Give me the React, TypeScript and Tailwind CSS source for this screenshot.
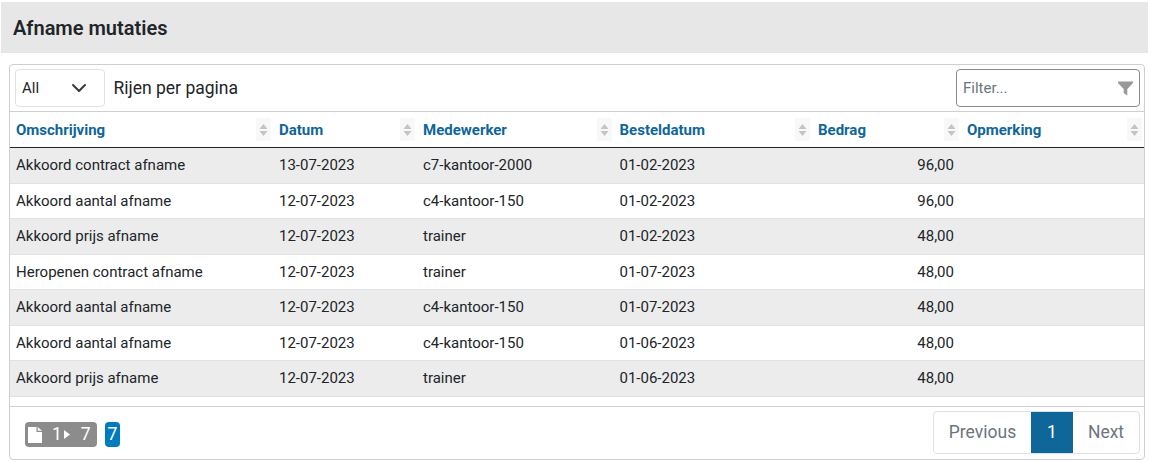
const rows = [
  ["Akkoord contract afname", "13-07-2023", "c7-kantoor-2000", "01-02-2023", "96,00"],
  ["Akkoord aantal afname", "12-07-2023", "c4-kantoor-150", "01-02-2023", "96,00"],
  ["Akkoord prijs afname", "12-07-2023", "trainer", "01-02-2023", "48,00"],
  ["Heropenen contract afname", "12-07-2023", "trainer", "01-07-2023", "48,00"],
  ["Akkoord aantal afname", "12-07-2023", "c4-kantoor-150", "01-07-2023", "48,00"],
  ["Akkoord aantal afname", "12-07-2023", "c4-kantoor-150", "01-06-2023", "48,00"],
  ["Akkoord prijs afname", "12-07-2023", "trainer", "01-06-2023", "48,00"],
];

const columns = [
  { name: "Omschrijving", width: "w-[263px]" },
  { name: "Datum", width: "w-[144px]" },
  { name: "Medewerker", width: "w-[196.5px]" },
  { name: "Besteldatum", width: "w-[198.5px]" },
  { name: "Bedrag", width: "w-[149px]" },
  { name: "Opmerking", width: "w-[183px]" },
];

function SortIcon() {
  return (
    <span className="flex h-[23px] w-[15px] items-center justify-center bg-[#f8f8f8]">
      <svg width="9" height="14" viewBox="0 0 9 14" fill="#c4c4c4">
        <path d="M4.5 1 L8.5 6 H.5 Z" />
        <path d="M.5 8 H8.5 L4.5 13 Z" />
      </svg>
    </span>
  );
}

export default function App() {
  return (
    <div className="h-[462px] w-[1149px] overflow-hidden bg-white pt-[2px] pl-[1px] font-['Roboto',sans-serif] text-[15px] text-[#212529]">
      <div className="flex h-[51px] w-[1147px] items-center bg-[#e7e7e7] pl-[12px]">
        <h1 className="text-[20px] font-semibold text-[#212529]">Afname mutaties</h1>
      </div>
      <div className="mt-[11px] ml-[8px] h-[396px] w-[1136px] rounded-[4px] border border-[#cfcfcf]">
        <div className="flex h-[47px] items-center justify-between border-b border-[#cfcfcf] pr-[4px] pl-[5px]">
          <div className="flex items-center">
            <div className="flex h-[38px] w-[90px] items-center justify-between rounded-[4px] border border-[#dee2e6] pr-[17px] pl-[6px]">
              <span>All</span>
              <svg width="16" height="16" viewBox="0 0 16 16" fill="none" stroke="#343a40" strokeWidth="2" strokeLinecap="round" strokeLinejoin="round">
                <path d="M2 5l6 6 6-6" />
              </svg>
            </div>
            <span className="ml-[8.5px] text-[17.5px]">Rijen per pagina</span>
          </div>
          <div className="flex h-[38px] w-[184px] items-center justify-between rounded-[4px] border border-[#8a8a8a] pr-[6px] pl-[6px]">
            <span className="text-[#6c757d]">Filter...</span>
            <svg width="15" height="15" viewBox="0 0 15 15" fill="#999999">
              <path d="M0 .5h15v1.6L9.3 8v6.5L5.7 12V8L0 2.1z" />
            </svg>
          </div>
        </div>
        <table className="w-[1134px] table-fixed border-collapse">
          <thead>
            <tr className="h-[35.5px] border-b border-[#212529]">
              {columns.map((col) => (
                <th key={col.name} className={`${col.width} p-0 text-left`}>
                  <div className="flex items-center justify-between pr-[2px] pl-[6px]">
                    <span className="pt-[2px] font-bold text-[#0f6698]">{col.name}</span>
                    <SortIcon />
                  </div>
                </th>
              ))}
            </tr>
          </thead>
          <tbody>
            {rows.map((row, i) => (
              <tr key={i} className={`h-[35.5px] border-b border-[#dee2e6] ${i % 2 === 0 ? "bg-[#ececec]" : "bg-white"}`}>
                <td className="px-[6px]">{row[0]}</td>
                <td className="px-[6px]">{row[1]}</td>
                <td className="px-[6px]">{row[2]}</td>
                <td className="px-[6px]">{row[3]}</td>
                <td className="pr-[7px] pl-[6px] text-right">{row[4]}</td>
                <td className="px-[6px]"></td>
              </tr>
            ))}
          </tbody>
        </table>
        <div className="mt-[9.5px] flex h-[54px] items-start justify-between border-t border-[#cfcfcf] pr-[4px] pl-[15px]">
          <div className="mt-[15px] flex items-center gap-[8px] text-[17.5px] text-white">
            <div className="flex h-[25px] w-[72px] items-center rounded-[4px] bg-[#8c8c8c] pl-[3px]">
              <svg width="14" height="16" viewBox="0 0 14 16" fill="white">
                <path d="M0 0h8.5v5H14v11H0zM9.7 0 14 3.8H9.7z" />
              </svg>
              <span className="ml-[10px]">1</span>
              <svg className="ml-[2px]" width="6" height="9" viewBox="0 0 6 9" fill="white">
                <path d="M0 0l6 4.5L0 9z" />
              </svg>
              <span className="ml-[11px]">7</span>
            </div>
            <div className="flex h-[25px] w-[15px] items-center justify-center rounded-[4px] bg-[#007bbd]">7</div>
          </div>
          <div className="mt-[4px] flex h-[43px] items-stretch overflow-hidden rounded-[4px] border border-[#dee2e6] text-[17.5px] text-[#6c757d]">
            <span className="flex w-[97px] items-center justify-center">Previous</span>
            <span className="flex w-[42px] items-center justify-center bg-[#0f6698] text-white">1</span>
            <span className="flex w-[66px] items-center justify-center">Next</span>
          </div>
        </div>
      </div>
    </div>
  );
}
